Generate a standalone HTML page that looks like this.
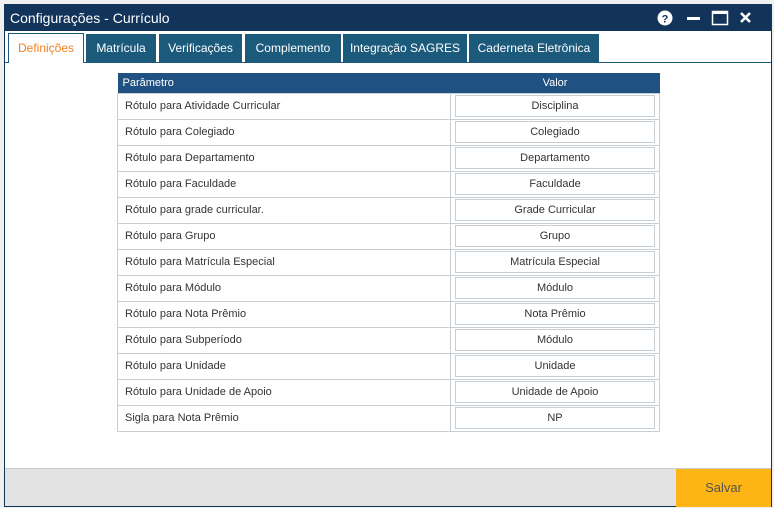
<!DOCTYPE html>
<html><head><meta charset="utf-8"><style>
*{margin:0;padding:0;box-sizing:border-box}
body{width:774px;height:508px;background:#f0f0f0;font-family:"Liberation Sans",sans-serif;position:relative;overflow:hidden}
.win{position:absolute;left:4px;top:4px;width:768px;height:503px;background:#fff;border:1px solid #12335a}
.title{position:absolute;left:0;top:0;width:766px;height:26px;background:#12335a;color:#fff;font-size:14px;line-height:26px;padding-left:5px}
.tabs{position:absolute;left:0;top:28px;width:766px;height:30px;border-bottom:1px solid #1c5a7c}
.tab{position:absolute;top:1px;height:28px;background:#1c5a7c;color:#fff;font-size:12px;line-height:29px;text-align:center}
.tab.act{background:#fff;color:#f58220;border:1px solid #1c5a7c;border-bottom:none;height:30px;top:0}
table{position:absolute;left:112px;top:68px;width:543px;border-collapse:collapse;font-size:11px;color:#333}
th{background:#1f5282;color:#fff;height:20px;font-weight:normal;text-align:left;padding-left:5px;font-size:11px}
th.v{text-align:center;padding:0}
tr.r{height:26px}
td{border:1px solid #c8cfd4;padding:0 0 0 7px}
td.v{width:209px;padding:0 4px}
td.v div{border:1px solid #c8cfd4;height:22px;line-height:21px;text-align:center}
.foot{position:absolute;left:0;top:463px;width:766px;height:38px;background:#e3e3e3;border-top:1px solid #ccc}
.btn{position:absolute;right:0;top:0;width:95px;height:38px;background:#fdb515;color:#555;font-size:13px;line-height:38px;text-align:center}
</style></head><body>
<div class="win">
<div class="title">Configurações - Currículo
<svg style="position:absolute;left:652px;top:5px" width="100" height="16">
<circle cx="8" cy="8" r="7.5" fill="#fff"/><text x="8" y="12.5" font-size="11" font-weight="bold" text-anchor="middle" fill="#12335a" font-family="Liberation Sans">?</text>
<rect x="30" y="7" width="13" height="3" fill="#fff"/>
<rect x="55.5" y="1.5" width="15" height="13" fill="none" stroke="#fff" stroke-width="1.5"/><rect x="55" y="1" width="16" height="3" fill="#fff"/>
<path d="M84 3L93 12M93 3L84 12" stroke="#fff" stroke-width="2.5"/>
</svg></div>
<div class="tabs">
<div class="tab act" style="left:3px;width:76px">Definições</div>
<div class="tab" style="left:81px;width:70px">Matrícula</div>
<div class="tab" style="left:154px;width:83px">Verificações</div>
<div class="tab" style="left:240px;width:96px">Complemento</div>
<div class="tab" style="left:338px;width:124px">Integração SAGRES</div>
<div class="tab" style="left:464px;width:130px">Caderneta Eletrônica</div>
</div>
<table>
<tr><th>Parâmetro</th><th class="v">Valor</th></tr>
<tr class="r"><td>Rótulo para Atividade Curricular</td><td class="v"><div>Disciplina</div></td></tr>
<tr class="r"><td>Rótulo para Colegiado</td><td class="v"><div>Colegiado</div></td></tr>
<tr class="r"><td>Rótulo para Departamento</td><td class="v"><div>Departamento</div></td></tr>
<tr class="r"><td>Rótulo para Faculdade</td><td class="v"><div>Faculdade</div></td></tr>
<tr class="r"><td>Rótulo para grade curricular.</td><td class="v"><div>Grade Curricular</div></td></tr>
<tr class="r"><td>Rótulo para Grupo</td><td class="v"><div>Grupo</div></td></tr>
<tr class="r"><td>Rótulo para Matrícula Especial</td><td class="v"><div>Matrícula Especial</div></td></tr>
<tr class="r"><td>Rótulo para Módulo</td><td class="v"><div>Módulo</div></td></tr>
<tr class="r"><td>Rótulo para Nota Prêmio</td><td class="v"><div>Nota Prêmio</div></td></tr>
<tr class="r"><td>Rótulo para Subperíodo</td><td class="v"><div>Módulo</div></td></tr>
<tr class="r"><td>Rótulo para Unidade</td><td class="v"><div>Unidade</div></td></tr>
<tr class="r"><td>Rótulo para Unidade de Apoio</td><td class="v"><div>Unidade de Apoio</div></td></tr>
<tr class="r"><td>Sigla para Nota Prêmio</td><td class="v"><div>NP</div></td></tr>
</table>
<div class="foot"><div class="btn">Salvar</div></div>
</div>
</body></html>
